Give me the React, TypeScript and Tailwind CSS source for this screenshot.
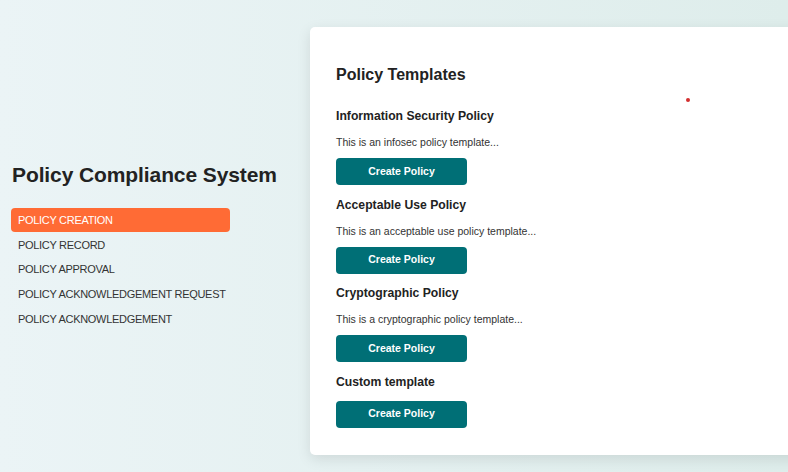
const menu = [
  'POLICY CREATION',
  'POLICY RECORD',
  'POLICY APPROVAL',
  'POLICY ACKNOWLEDGEMENT REQUEST',
  'POLICY ACKNOWLEDGEMENT',
];

const templates = [
  { title: 'Information Security Policy', desc: 'This is an infosec policy template...' },
  { title: 'Acceptable Use Policy', desc: 'This is an acceptable use policy template...' },
  { title: 'Cryptographic Policy', desc: 'This is a cryptographic policy template...' },
  { title: 'Custom template', desc: '' },
];

export default function App() {
  return (
    <div className="w-[788px] h-[472px] overflow-hidden flex bg-gradient-to-r from-[#ebf4f6] to-[#deedeb] font-['Liberation_Sans',Arial,sans-serif]">
      {/* Sidebar */}
      <aside className="w-[310px] shrink-0 pt-[161px] pl-[11px]">
        <h1 className="pl-px text-[21px] leading-[28px] font-bold text-[#222] tracking-[-0.1px]">Policy Compliance System</h1>
        <nav className="mt-[19px] w-[219px] flex flex-col gap-[0.75px]">
          {menu.map((item, i) => (
            <a
              key={item}
              className={
                i === 0
                  ? 'h-[24px] flex items-center px-[7px] rounded-[4px] bg-[#ff6b35] text-white text-[11px] tracking-[-0.3px] whitespace-nowrap'
                  : 'h-[24px] flex items-center px-[7px] text-[#333] text-[11px] tracking-[-0.3px] whitespace-nowrap'
              }
            >
              {item}
            </a>
          ))}
        </nav>
      </aside>

      {/* Main card */}
      <main className="relative mt-[27px] h-[428px] flex-1 mr-[-20px] bg-white rounded-l-[5px] shadow-[0_4px_14px_rgba(0,0,0,0.1)] pl-[26px] pt-[38px]">
        <span className="absolute left-[376px] top-[71px] w-[4px] h-[4px] rounded-full bg-[#d32f2f]" />
        <h2 className="text-[16px] leading-[20px] font-bold text-[#222]">Policy Templates</h2>
        <div className="mt-[23px] flex flex-col gap-[11.5px]">
          {templates.map((t) => (
            <section key={t.title} className="flex flex-col">
              <h3 className="text-[12.2px] leading-[16px] font-bold text-[#222]">{t.title}</h3>
              {t.desc ? (
                <p className="mt-[11px] text-[10.5px] leading-[14px] text-[#333]">{t.desc}</p>
              ) : null}
              <button
                className={
                  (t.desc ? 'mt-[9px] ' : 'mt-[11px] ') +
                  'w-[131px] h-[27px] rounded-[4px] bg-[#006f76] text-white text-[10.5px] font-bold'
                }
              >
                Create Policy
              </button>
            </section>
          ))}
        </div>
      </main>
    </div>
  );
}
